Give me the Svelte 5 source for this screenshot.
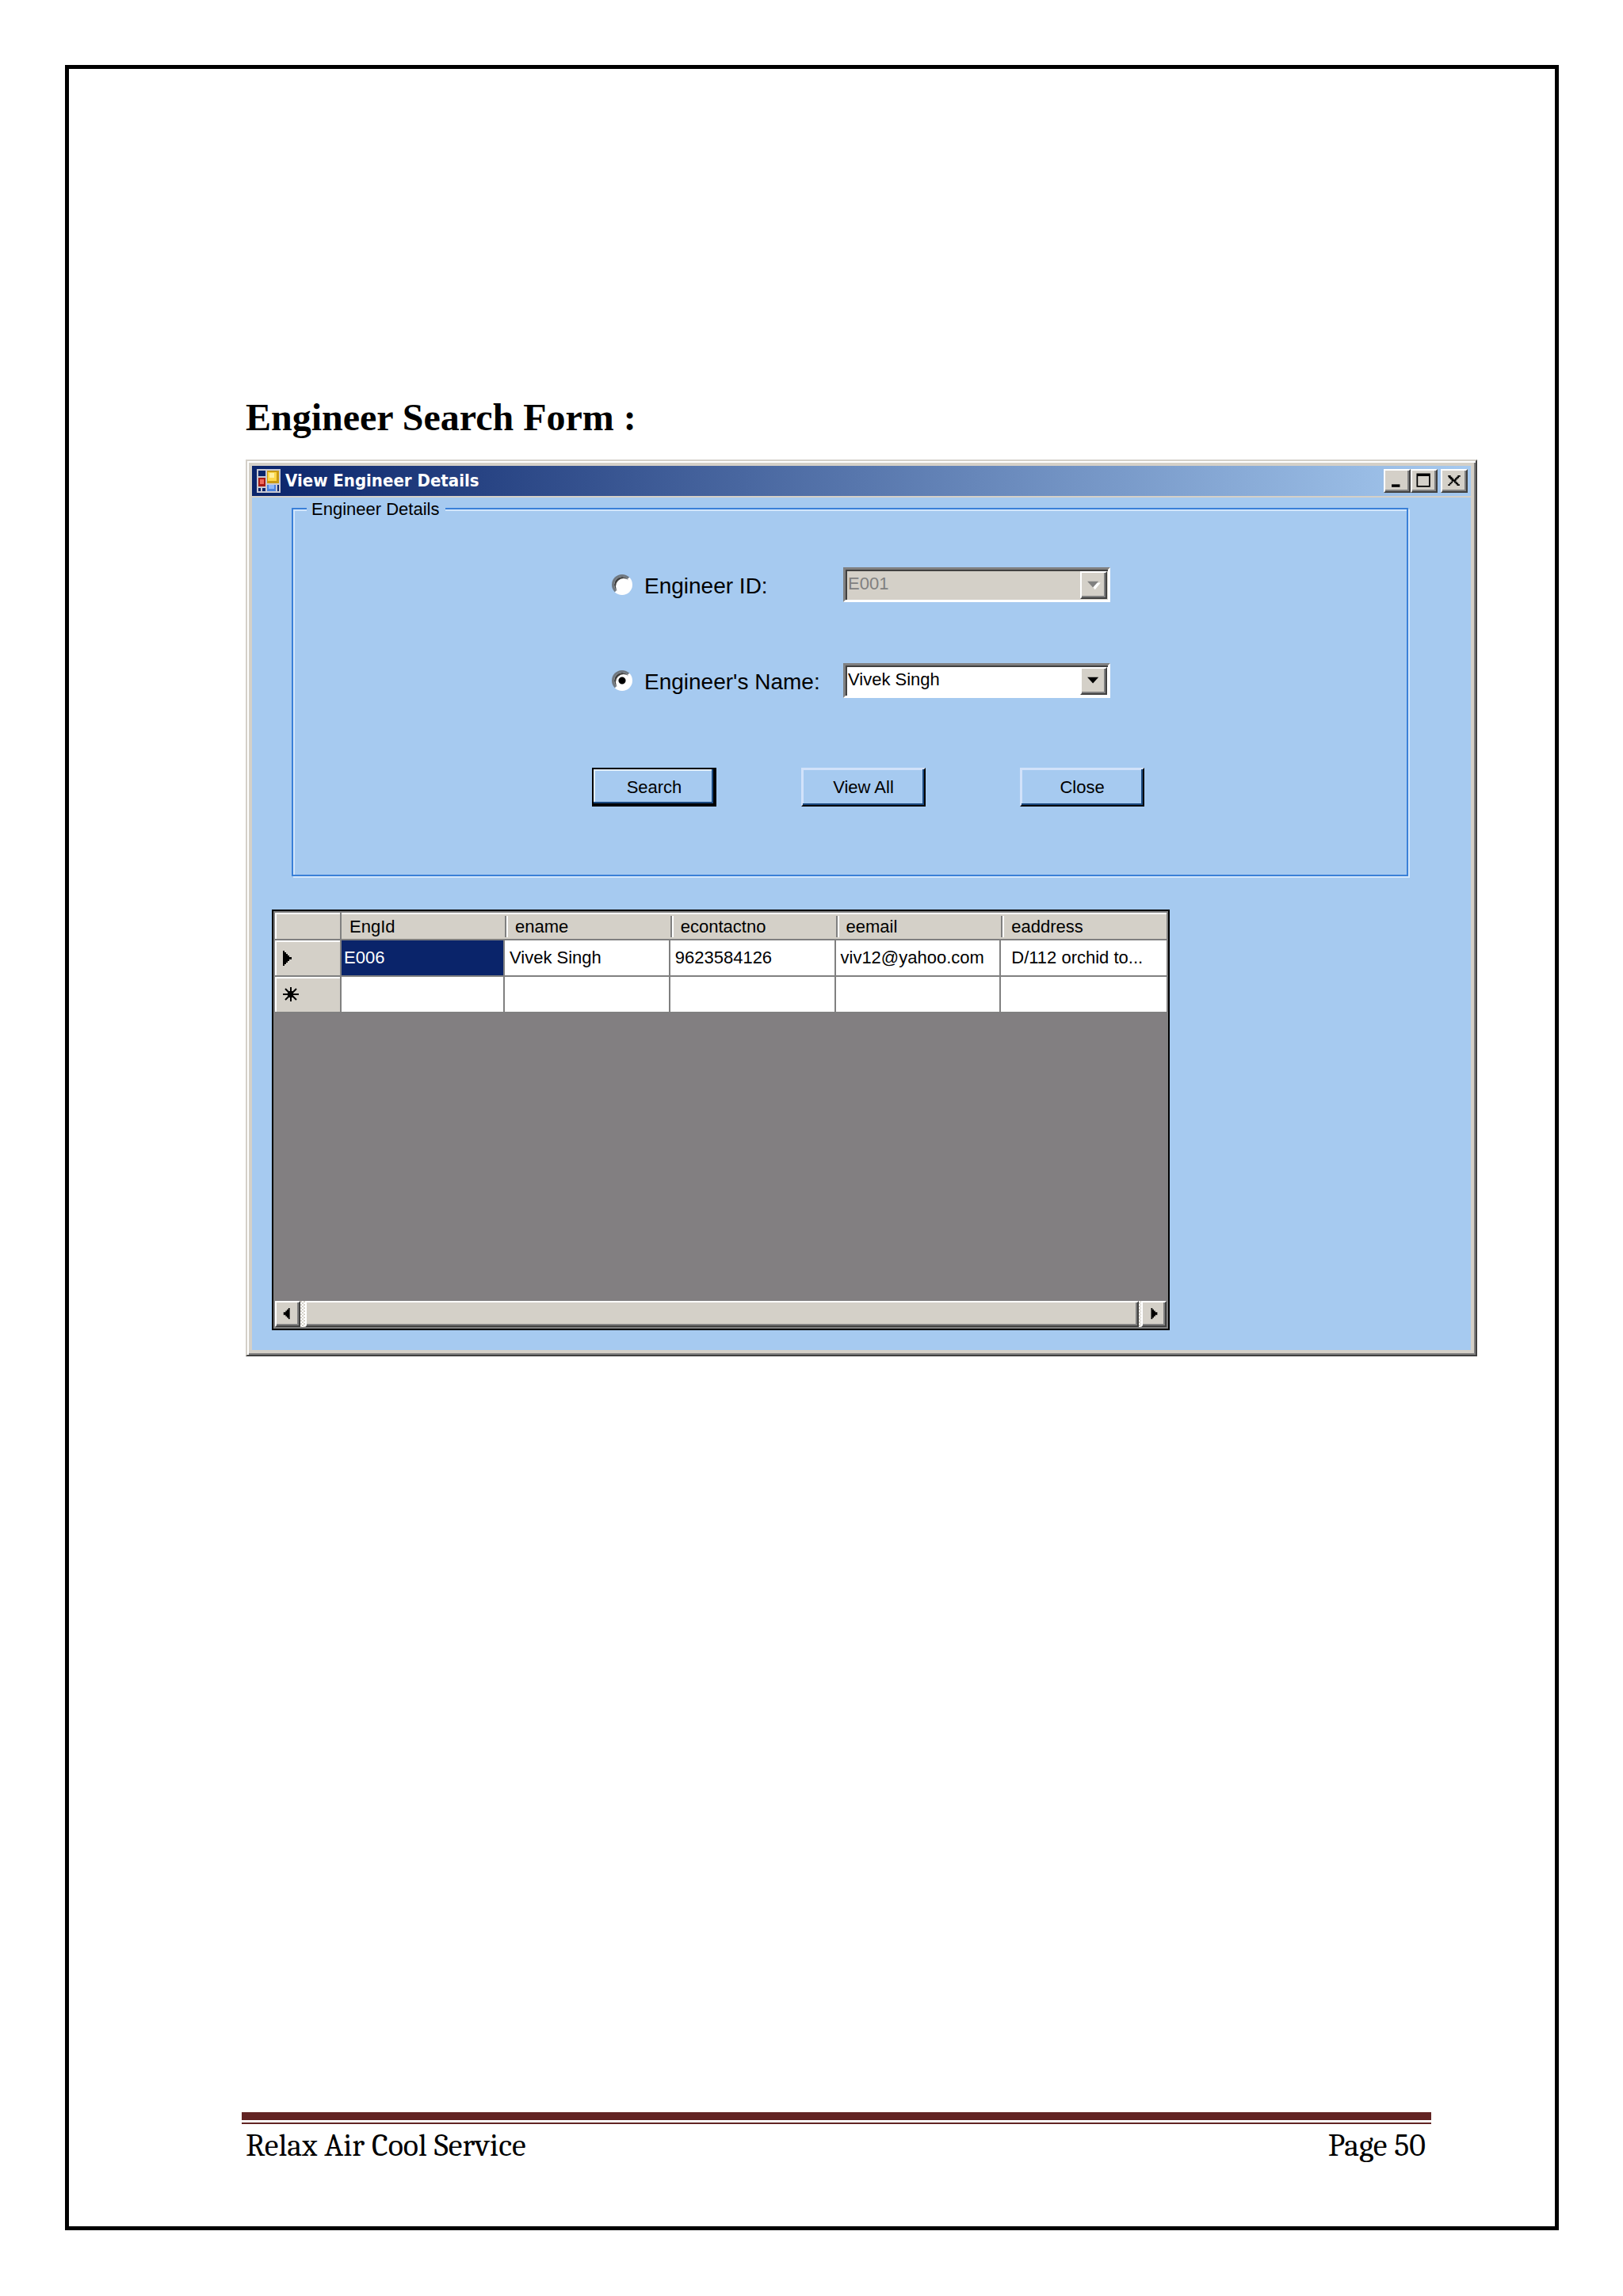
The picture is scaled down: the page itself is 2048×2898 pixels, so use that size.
<script>
  const columns = ['EngId', 'ename', 'econtactno', 'eemail', 'eaddress'];
  const engineers = [
    ['E006', 'Vivek Singh', '9623584126', 'viv12@yahoo.com', 'D/112 orchid to...']
  ];

  let searchBy = 'name';
</script>

<div class="sheet">
  <main class="content">
    <h1>Engineer Search Form :</h1>

    <section class="window">
      <header class="title-bar">
        <svg class="app-icon" viewBox="0 0 30 30" aria-hidden="true">
          <rect width="30" height="30" fill="#c9c9d2" />
          <rect x="2" y="2" width="9" height="7" fill="#0a246a" />
          <rect x="2" y="11" width="9" height="11" fill="#a81a14" />
          <rect x="4" y="13" width="5" height="6" fill="#f0685a" />
          <rect x="13" y="2" width="15" height="16" fill="#c99a12" />
          <rect x="14" y="4" width="11" height="11" fill="#ffd84a" />
          <rect x="16" y="5" width="6" height="6" fill="#fff0a0" />
          <rect x="13" y="20" width="11" height="8" fill="#4c82dc" />
          <rect x="15" y="20" width="7" height="5" fill="#8db8fa" />
          <rect x="2" y="24" width="3" height="4" fill="#0a246a" />
          <rect x="7" y="24" width="4" height="4" fill="#0a246a" />
          <rect x="26" y="20" width="2" height="8" fill="#0a246a" />
        </svg>
        <h2>View Engineer Details</h2>
        <div class="caption-buttons">
          <button class="raised" aria-label="Minimize">
            <svg viewBox="0 0 34 30"><path d="M9 20h12v4H9z" /></svg>
          </button>
          <button class="raised" aria-label="Maximize">
            <svg viewBox="0 0 34 30"><path fill-rule="evenodd" d="M6 4h20v20H6zM8 8v14h16V8z" /></svg>
          </button>
          <button class="raised close" aria-label="Close window">
            <svg viewBox="0 0 34 30"><path d="M8 7h4v2h2v2h2v2h2v-2h2V9h2V7h4v2h-2v2h-2v2h-2v2h-1v1h2v2h2v2h2v2h-4v-2h-2v-2h-2v-2h-2v2h-2v2h-2v2H8v-2h2v-2h2v-2h2v-1h-1v-2h-2v-2H9V9H8z" /></svg>
          </button>
        </div>
      </header>

      <div class="client">
        <fieldset>
          <legend>Engineer Details</legend>

          <div class="row">
            <input type="radio" id="by-id" value="id" bind:group={searchBy} />
            <label for="by-id">Engineer ID:</label>
            <div class="combo">
              <select aria-label="Engineer ID" disabled={searchBy !== 'id'}>
                <option>E001</option>
              </select>
              <span class="arrow raised" class:off={searchBy !== 'id'}>
                <svg viewBox="0 0 34 35">
                  <path class="shine" d="M11 14h16l-8 10z" />
                  <path d="M8 12h16l-8 9z" />
                </svg>
              </span>
            </div>
          </div>

          <div class="row">
            <input type="radio" id="by-name" value="name" bind:group={searchBy} />
            <label for="by-name">Engineer's Name:</label>
            <div class="combo">
              <select aria-label="Engineer's Name" disabled={searchBy !== 'name'}>
                <option>Vivek Singh</option>
              </select>
              <span class="arrow raised" class:off={searchBy !== 'name'}>
                <svg viewBox="0 0 34 35">
                  <path class="shine" d="M11 14h16l-8 10z" />
                  <path d="M8 12h16l-8 9z" />
                </svg>
              </span>
            </div>
          </div>

          <div class="actions">
            <button class="action default">Search</button>
            <button class="action">View All</button>
            <button class="action">Close</button>
          </div>
        </fieldset>

        <div class="grid">
          <div class="rows">
            <table>
              <colgroup>
                <col class="selector-col" />
                <col class="id-col" />
                <col /><col /><col /><col />
              </colgroup>
              <thead>
                <tr>
                  <td class="selector"></td>
                  {#each columns as column}
                    <th scope="col">{column}</th>
                  {/each}
                </tr>
              </thead>
              <tbody>
                {#each engineers as engineer}
                  <tr>
                    <td class="selector">
                      <svg viewBox="0 0 24 24"><path d="M2 3h2v2h2v2h2v2h2v2h3v3h-3v2H8v2H6v2H4v2H2z" /></svg>
                    </td>
                    {#each engineer as value, i}
                      <td class:selected={i === 0}>{value}</td>
                    {/each}
                  </tr>
                {/each}
                <tr>
                  <td class="selector">
                    <svg viewBox="0 0 24 24">
                      <path d="M12 3v18M2 12h20M5 5l14 14M19 5L5 19" stroke="#000" stroke-width="2" />
                      <path d="M8 8h7v8H8z" />
                    </svg>
                  </td>
                  {#each columns as column}
                    <td></td>
                  {/each}
                </tr>
              </tbody>
            </table>
          </div>
          <div class="scrollbar">
            <button class="raised" aria-label="Scroll left">
              <svg viewBox="0 0 32 33"><path d="M19 8v16h-2v-2h-2v-2h-2v-2h-3v-4h3v-2h2v-2h2V8z" /></svg>
            </button>
            <div class="thumb raised"></div>
            <button class="raised" aria-label="Scroll right">
              <svg viewBox="0 0 32 33"><path d="M12 8v16h2v-2h2v-2h2v-2h3v-4h-3v-2h-2v-2h-2V8z" /></svg>
            </button>
          </div>
        </div>
      </div>
    </section>
  </main>

  <footer>
    <div class="footer-text">
      <span>Relax Air Cool Service</span>
      <span>Page 50</span>
    </div>
  </footer>
</div>

<style>
  :global(body) {
    background: #fff;
  }

  .sheet {
    --face: #d4d0c8;
    --form: #a6caf0;
    box-sizing: border-box;
    display: flex;
    flex-direction: column;
    min-height: calc(100vh - 165px);
    margin: 82px 81px 83px 82px;
    border: 5px solid #000;
    color: #000;
  }

  .content {
    margin: 412px 98px 80px 223px;
  }

  h1 {
    margin: 0 0 25px;
    font: bold 48px/56px "Liberation Serif", serif;
  }

  .window {
    border: 2px solid;
    border-color: #d4d0c8 #404040 #404040 #d4d0c8;
    padding: 6px;
    background: var(--face);
    box-shadow: inset 2px 2px #fff, inset -2px -2px #808080;
    font: 22px/30px "Liberation Sans", Arial, sans-serif;
  }

  .raised {
    box-sizing: border-box;
    border: 2px solid;
    border-color: #fff #404040 #404040 #fff;
    padding: 0;
    background: var(--face);
    box-shadow: inset -2px -2px #808080;
  }

  .title-bar {
    display: flex;
    align-items: center;
    height: 38px;
    padding: 0 4px 0 6px;
    background: linear-gradient(to right, #0a246a, #a6caf0);
  }

  .app-icon {
    width: 30px;
    height: 30px;
  }

  h2 {
    margin: 0 auto 0 6px;
    color: #fff;
    font: bold 22px/30px "DejaVu Sans Condensed", "DejaVu Sans", sans-serif;
  }

  .caption-buttons {
    display: flex;
  }

  .caption-buttons button {
    width: 34px;
    height: 30px;
  }

  .caption-buttons .close {
    margin-left: 4px;
  }

  button svg,
  .arrow svg {
    display: block;
    width: 100%;
    height: 100%;
  }

  .client {
    margin-top: 2px;
    padding: 0 79px 25px 50px;
    background: var(--form);
  }

  fieldset {
    min-width: 0;
    margin: 0;
    border: 2px solid #3a80d8;
    padding: 60px 20px 86px 377px;
    box-shadow: 2px 2px #d2e6fc, inset 2px 2px #d2e6fc;
  }

  legend {
    margin-left: -360px;
    padding: 2px 8px 0 6px;
    background: var(--form);
    line-height: 26px;
  }

  .row {
    display: grid;
    grid-template-columns: 41px 251px 337px;
    align-items: center;
    margin: 0 0 77px 25px;
  }

  .row label {
    padding-top: 4px;
    font: 28px/36px "Liberation Sans", Arial, sans-serif;
  }

  input[type="radio"] {
    appearance: none;
    width: 26px;
    height: 26px;
    margin: 0;
    border: 3px solid;
    border-color: #707880 #fff #fff #707880;
    border-radius: 50%;
    background: #fff;
    box-shadow: inset 2px 2px #404040;
  }

  input[type="radio"]:checked {
    background: radial-gradient(circle, #000 4px, #fff 5px);
  }

  .combo {
    position: relative;
  }

  select {
    appearance: none;
    display: block;
    width: 100%;
    height: 44px;
    border: 3px solid;
    border-color: #808080 #fff #fff #808080;
    border-radius: 0;
    padding: 0 40px 2px 3px;
    background: #fff;
    box-shadow: inset 2px 2px #404040;
    color: #000;
    font: inherit;
  }

  select:disabled {
    background: var(--face);
    color: #808080;
    opacity: 1;
  }

  .arrow {
    position: absolute;
    top: 5px;
    right: 4px;
    width: 34px;
    height: 35px;
    pointer-events: none;
  }

  .arrow .shine {
    display: none;
  }

  .off .shine {
    display: block;
    fill: #fff;
  }

  .off path:last-child {
    fill: #808080;
  }

  .actions {
    display: grid;
    grid-template-columns: 264px 276px 157px;
    margin-top: 88px;
  }

  .action {
    width: 157px;
    height: 49px;
    border: 2px solid;
    border-color: #d2e2fa #000 #000 #d2e2fa;
    padding: 0;
    background: var(--form);
    box-shadow: inset -2px -2px #1c4a80, inset 1px 1px #d2e2fa;
    color: #000;
    font: inherit;
  }

  .default {
    border-color: #000;
    box-shadow: inset -2px -2px #000, inset -4px -4px #1c4a80, inset 2px 2px #e2eefc;
  }

  .grid {
    margin: 42px 301px 0 -25px;
    border: 2px solid #000;
    padding: 2px;
    background: #808080;
  }

  .rows {
    min-height: 490px;
    background: #827f81;
  }

  table {
    width: 100%;
    border-spacing: 0;
    table-layout: fixed;
  }

  .selector-col {
    width: 84px;
  }

  .id-col {
    width: 206px;
  }

  th,
  td {
    box-sizing: border-box;
    height: 46px;
    border: solid #808080;
    border-width: 0 2px 2px 0;
    padding: 0 0 0 6px;
    background: #fff;
    text-align: left;
    white-space: nowrap;
    overflow: hidden;
  }

  thead td,
  th {
    height: 35px;
  }

  /* column headers are parted by short etched lines */
  th {
    border-right: 0;
    padding: 2px 0 0 13px;
    background:
      linear-gradient(to right, #808080 2px, #fff 2px) left 4px / 4px 27px no-repeat,
      linear-gradient(#fff, #fff) top / 100% 2px no-repeat,
      var(--face);
    font-weight: normal;
  }

  .selector + th {
    background: linear-gradient(#fff, #fff) top / 100% 2px no-repeat, var(--face);
    padding-left: 10px;
  }

  td:last-child {
    border-right: 0;
    padding-left: 13px;
  }

  .selector {
    padding-left: 8px;
    background: var(--face);
    box-shadow: inset 2px 2px #fff;
  }

  .selector svg {
    display: block;
    width: 24px;
    height: 24px;
  }

  .selected {
    background: #0a246a;
    color: #fff;
    padding-left: 3px;
  }

  .scrollbar {
    display: flex;
    gap: 3px;
    height: 33px;
    background: repeating-conic-gradient(#fff 0 25%, #d4d0c8 0 50%) 0 0 / 4px 4px;
  }

  .scrollbar button {
    width: 32px;
  }

  .thumb {
    flex: 1;
    margin-left: 3px;
  }

  footer {
    margin: auto 156px 75px 218px;
    border-top: 10px solid #622423;
    padding-top: 3px;
  }

  .footer-text {
    display: flex;
    justify-content: space-between;
    border-top: 2px solid #622423;
    padding: 0 7px 0 5px;
    font: 40px/54px Cambria, Caladea, "Liberation Serif", serif;
  }
</style>
